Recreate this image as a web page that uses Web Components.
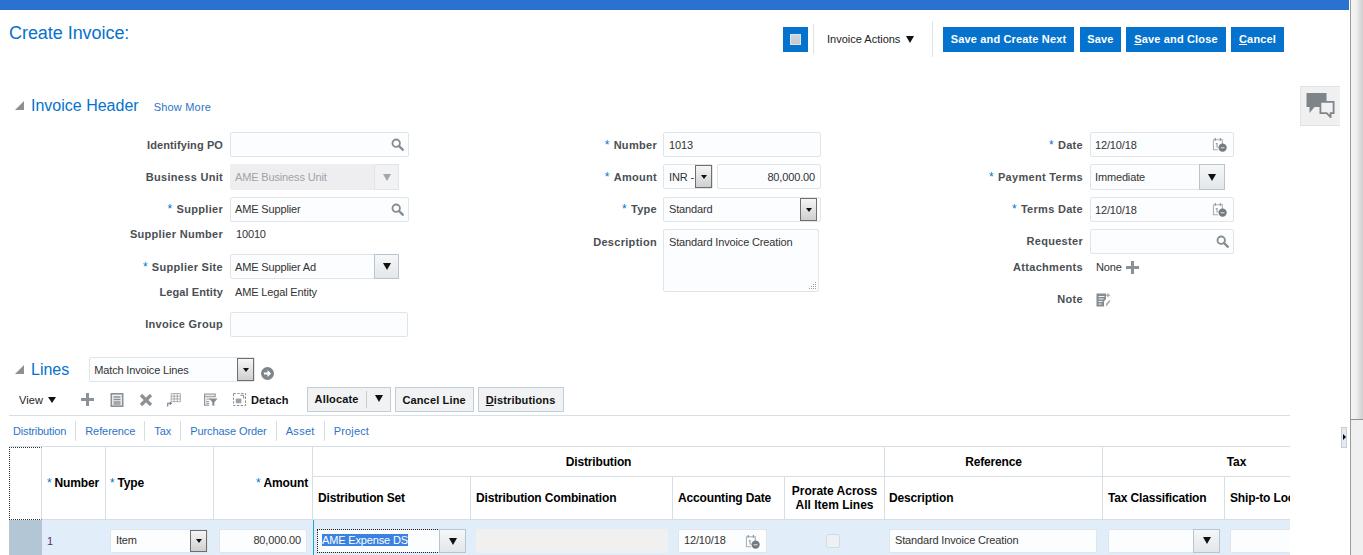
<!DOCTYPE html>
<html><head><meta charset="utf-8"><title>Create Invoice</title>
<style>
html,body{margin:0;padding:0;height:555px;overflow:hidden;background:#fff;font-family:"Liberation Sans",Arial,sans-serif}
</style></head><body>
<invoice-app>
  <page-title slot="main"></page-title>
  <section-head slot="main" title="Invoice Header" style="margin-top:21px;height:29px"><a-link style="margin-left:15px;margin-top:3px">Show More</a-link></section-head>
  <form-grid slot="main" style="margin-top:12px">
    <form-col style="--lw:223px;--gap:7px;width:440px">
      <form-row label="Identifying PO" h="32" style="--ls:.1px"><x-input w="179" icon="search"></x-input></form-row>
      <form-row label="Business Unit" h="33"><x-select w="169" btn="25" kind="disabled" value="AME Business Unit" style="height:26px"></x-select></form-row>
      <form-row label="Supplier" req h="25" style="--lh:25px"><x-input w="179" pl="4" h2 icon="search" value="AME Supplier"></x-input></form-row>
      <form-row label="Supplier Number" h="32" style="--lh:25px"><x-text style="margin-left:6px">10010</x-text></form-row>
      <form-row label="Supplier Site" req h="26"><x-select w="169" btn="25" kind="flat" value="AME Supplier Ad"></x-select></form-row>
      <form-row label="Legal Entity" h="32" style="--ls:.1px;--lh:25px"><x-text style="margin-left:5px">AME Legal Entity</x-text></form-row>
      <form-row label="Invoice Group" h="25" style="--lh:25px"><x-input w="178"></x-input></form-row>
    </form-col>
    <form-col style="--lw:217px;--gap:6px;width:420px">
      <form-row label="Number" req h="32"><x-input w="158" value="1013"></x-input></form-row>
      <form-row label="Amount" req h="33"><x-select w="50" btn="17" kind="native" pl="5" value="INR -" style="margin-right:4px"></x-select><x-input w="104" value="80,000.00" align="right"></x-input></form-row>
      <form-row label="Type" req h="32" style="--lh:25px"><x-select w="158" btn="17" kind="native" pl="5" inset="3" tight value="Standard"></x-select></form-row>
      <form-row label="Description" h="63"><x-area w="156" h="63">Standard Invoice Creation</x-area></form-row>
    </form-col>
    <form-col style="--lw:223px;--gap:7px;width:400px">
      <form-row label="Date" req h="32"><x-input w="144" pl="4" icon="cal" value="12/10/18"></x-input></form-row>
      <form-row label="Payment Terms" req h="33"><x-select w="135" btn="26" kind="flat" value="Immediate" style="height:26px"></x-select></form-row>
      <form-row label="Terms Date" req h="32" style="--lh:25px"><x-input w="144" pl="4" icon="cal" value="12/10/18"></x-input></form-row>
      <form-row label="Requester" h="26" style="--lh:25px"><x-input w="144" icon="search"></x-input></form-row>
      <form-row label="Attachments" h="32" style="--lh:25px"><x-text style="margin-left:6px">None</x-text><x-icon name="plus" style="margin-left:4px;--s:13px"></x-icon></form-row>
      <form-row label="Note" h="25" style="--lh:25px"><x-icon name="note" style="margin-left:6px;--s:15px"></x-icon></form-row>
    </form-col>
  </form-grid>
  <section-head slot="main" title="Lines" style="margin-top:20px;height:25px">
    <x-select w="166" btn="17" kind="native" value="Match Invoice Lines" style="margin-left:20px"></x-select>
    <x-icon name="go" style="margin-left:6px;margin-top:7px;--s:13px"></x-icon>
  </section-head>
  <lines-toolbar slot="main" style="margin-top:5px"></lines-toolbar>
  <lines-tabs slot="main"></lines-tabs>
  <lines-table slot="main">
    <t-cell head corner style="grid-row:1/3"></t-cell>
    <t-cell head style="grid-row:1/3;padding-left:5px"><req-mark></req-mark>Number</t-cell>
    <t-cell head style="grid-row:1/3;padding-left:4px"><req-mark></req-mark>Type</t-cell>
    <t-cell head end style="grid-row:1/3;padding-right:4px"><req-mark></req-mark>Amount</t-cell>
    <t-cell head center style="grid-column:span 4">Distribution</t-cell>
    <t-cell head center>Reference</t-cell>
    <t-cell head center style="grid-column:span 2">Tax</t-cell>
    <t-cell head style="padding-left:5px">Distribution Set</t-cell>
    <t-cell head style="padding-left:5px">Distribution Combination</t-cell>
    <t-cell head style="padding-left:5px">Accounting Date</t-cell>
    <t-cell head center style="line-height:14px;letter-spacing:0">Prorate Across<br>All Item Lines</t-cell>
    <t-cell head style="padding-left:4px">Description</t-cell>
    <t-cell head style="padding-left:5px">Tax Classification</t-cell>
    <t-cell head style="padding-left:5px">Ship-to Loc</t-cell>

    <t-cell rowhead></t-cell>
    <t-cell body style="padding-left:5px;padding-top:5px;color:#5a2d6e">1</t-cell>
    <t-cell body style="padding-left:4px"><x-select w="98" btn="17" kind="native" pl="5" tight value="Item" style="height:24px"></x-select></t-cell>
    <t-cell body style="padding-left:5px"><x-input w="88" h="24" h2 value="80,000.00" align="right"></x-input></t-cell>
    <t-cell body accent style="padding-left:3px"><x-select w="149" btn="27" kind="flat" tight value="AME Expense DS" selected style="height:24px"></x-select></t-cell>
    <t-cell body style="padding-left:5px"><grey-box></grey-box></t-cell>
    <t-cell body style="padding-left:5px"><x-input w="89" h="24" h2 icon="cal" value="12/10/18"></x-input></t-cell>
    <t-cell body center style="padding-right:5px"><x-check></x-check></t-cell>
    <t-cell body style="padding-left:4px"><x-input w="208" h="24" h2 value="Standard Invoice Creation"></x-input></t-cell>
    <t-cell body style="padding-left:5px"><x-select w="112" btn="27" kind="flat" style="height:24px"></x-select></t-cell>
    <t-cell body style="padding-left:5px"><x-input w="90" h="24"></x-input></t-cell>
  </lines-table>
</invoice-app>
<script>
const ICONS={
 search:'<svg viewBox="0 0 14 14" width="100%" height="100%"><circle cx="5.600" cy="5.600" r="4" fill="#fff" stroke="#858d92" stroke-width="2"/><path d="M8.600 8.600l4 4" stroke="#858d92" stroke-width="2.600" stroke-linecap="round"/></svg>',
 cal:'<svg viewBox="0 0 16 16" width="100%" height="100%"><path d="M1.500 3h9.500v5M1.500 3v10.500h5" fill="none" stroke="#a7adb1" stroke-width="1.100"/><path d="M3.500 1v3M9 1v3" stroke="#8f969b" stroke-width="1.300"/><path d="M4 7h1.400v4.500" fill="none" stroke="#9aa1a6" stroke-width="1.200"/><circle cx="11.300" cy="11.300" r="4.400" fill="#747b80"/><path d="M9.300 11.500h4" stroke="#e4e6e8" stroke-width="1.100"/></svg>',
 plus:'<svg viewBox="0 0 13 13" width="100%" height="100%"><path d="M5 0h3v5h5v3H8v5H5V8H0V5h5z" fill="#8b9297"/></svg>',
 doc:'<svg viewBox="0 0 13 14" width="100%" height="100%"><rect x=".8" y=".8" width="11.400" height="12.400" fill="#eef0f1" stroke="#8b9297" stroke-width="1.600"/><path d="M3 4h7M3 6.500h7M3 9h7M3 11h7" stroke="#8b9297" stroke-width="1.300"/></svg>',
 x:'<svg viewBox="0 0 14 14" width="100%" height="100%"><path d="M2 2l10 10M12 2L2 12" stroke="#8b9297" stroke-width="3.200"/></svg>',
 freeze:'<svg viewBox="0 0 15 15" width="100%" height="100%"><path d="M4.500.7h9.800v8.600H4.500zM4.500 3.500h9.800M7.700.7v8.600M11 .7v8.600M4.500 6.400h9.800" fill="none" stroke="#989fa4" stroke-width=".9"/><path d="M.8 14.500v-3.500h3" fill="none" stroke="#70777c" stroke-width="1.200"/><path d="M3 9l2.600 2L3 13z" fill="#70777c"/></svg>',
 filter:'<svg viewBox="0 0 15 14" width="100%" height="100%"><path d="M.6.6h11.400v3H.6zM.6 3.600v9h5" fill="#e6e8ea" stroke="#8b9297" stroke-width="1.100"/><path d="M2.500 6h5M2.500 8.500h3M2.500 10.600h3" stroke="#8b9297"/><path d="M5.500 5.500h9l-3.400 4v4l-2.200-1v-3z" fill="#858c91"/></svg>',
 detach:'<svg viewBox="0 0 14 14" width="100%" height="100%"><rect x=".5" y=".5" width="13" height="13" fill="none" stroke="#777e83" stroke-dasharray="2.500 1.600"/><rect x="3" y="6" width="6" height="5" fill="#9ba1a6"/><path d="M8 2.500h3.500v3.500" fill="none" stroke="#777e83"/></svg>',
 note:'<svg viewBox="0 0 15 15" width="100%" height="100%"><path d="M.5 1.500h9.500v5.500l-2 2.500v5H.5z" fill="#858c91"/><path d="M2.500 4.500h6M2.500 7h5M2.500 9.500h4M2.500 12h3" stroke="#f0f1f2"/><path d="M12 .5l.8 2 2 .8-2 .8-.8 2-.8-2-2-.8 2-.8zM9.500 14.500l.8-3 3.200-3.500 1 1-3.500 4.500z" fill="#a3a9ad"/></svg>',
 go:'<svg viewBox="0 0 13 13" width="100%" height="100%"><circle cx="6.500" cy="6.500" r="6.500" fill="#7f868b"/><path d="M3 5.500h3.500V3l3.500 3.500L6.500 10V7.500H3z" fill="#fff"/></svg>',
 tri:'<svg viewBox="0 0 10 10" width="100%" height="100%"><path d="M0 10L10 0v10z" fill="#8c9196"/></svg>',
 comment:'<svg viewBox="0 0 28 25" width="100%" height="100%"><path d="M0 0h20v14h-12l-5 6v-6H0z" fill="#7e858a"/><path d="M13.900 8.900h13.200v11.200h-3v4l-4-4h-6.200z" fill="#f0f1f2" stroke="#7e858a" stroke-width="1.800"/></svg>'
};
function def(name,css,html,setup){
  customElements.define(name,class extends HTMLElement{
    constructor(){super();this.attachShadow({mode:'open'});}
    connectedCallback(){
      const a=n=>this.getAttribute(n);
      const h=typeof html==='function'?html(a,this):html;
      this.shadowRoot.innerHTML='<style>svg{display:block}'+css+'</style>'+h;
      if(setup)setup(this,a);
    }
  });
}
const TXT='font:11px "Liberation Sans",Arial,sans-serif;color:#333;letter-spacing:-.15px;';
def('invoice-app',`
  :host{display:flex;width:1363px;height:555px;overflow:hidden;position:relative}
  .m{width:1350px;display:flex;flex-direction:column;flex:none}
  .bar{height:10px;background:#2a72cf;flex:none;margin-right:1px}
  .sb{flex:1;border-left:1px solid #9a9a9a;background:#f0f0f0;display:flex;flex-direction:column}
  .th{height:419px;background:linear-gradient(90deg,#f4f4f4,#f0f0f0 40%,#cfcfcf);border-bottom:1px solid #8f8f8f;flex:none}
  .fb{position:absolute;left:1300px;top:86px;width:38px;height:38px;border:1px solid #dfe3e6;border-right:1px solid #f0f0f0;background:#f0f0f0;padding:0}
  .fb div{position:absolute;left:5px;top:6px;width:29px;height:25px}
  .sp{position:absolute;left:1341px;top:427px;width:4px;height:19px;background:#e4eaf1;border:1px solid #c5ced8}
  .sp i{position:absolute;left:1px;top:6px;border-left:3px solid #000;border-top:3px solid transparent;border-bottom:3px solid transparent}
`,()=>`<div class="m"><div class="bar"></div><slot name="main"></slot></div>
  <div class="sb"><div class="th"></div></div><div class="fb"><div>${ICONS.comment}</div></div><div class="sp"><i></i></div><slot hidden></slot>`);
def('page-title',`
  :host{display:flex;height:60px;padding:0 66px 0 9px;align-items:flex-start;box-sizing:border-box}
  h1{margin:12px 0 0;font:18px/22px "Liberation Sans",Arial,sans-serif;color:#0572ce;flex:1;letter-spacing:-.05px}
  .acts{display:flex;align-items:center;margin-top:11px;height:36px}
  .ib{width:25px;height:25px;background:#0572ce;display:flex;align-items:center;justify-content:center}
  .ib i{display:block;width:11px;height:11px;background:linear-gradient(#cfd4d9,#c4cad0);border:1px solid #dbe5ee;box-sizing:border-box}
  .sep{width:1px;background:#dfe3e7}
  .ia{font:11px "Liberation Sans",Arial,sans-serif;color:#222;margin:0 16px 0 13px;display:flex;align-items:center;width:89px;white-space:nowrap}
  .ia i{margin-left:6px;border-top:7px solid #111;border-left:4px solid transparent;border-right:4px solid transparent}
  .g{display:flex;gap:5px;margin-left:10px}
  .g x-button:first-child{margin-right:1px}
`,()=>`<h1>Create Invoice:</h1><div class="acts"><div class="ib"><i></i></div>
   <div class="sep" style="height:30px;margin-left:5px"></div>
   <div class="ia">Invoice Actions<i></i></div>
   <div class="sep" style="height:36px"></div>
   <div class="g"><x-button w="131" primary>Save and Create Next</x-button><x-button w="41" primary>Save</x-button><x-button w="100" primary><u>S</u>ave and Close</x-button><x-button w="53" primary><u>C</u>ancel</x-button></div></div>`);
def('x-button',`
  :host{display:inline-flex;box-sizing:border-box;height:25px;align-items:center;justify-content:center;font:bold 11px "Liberation Sans",Arial,sans-serif;white-space:nowrap;background:#f0f2f4;border:1px solid #c3cdd5;color:#111;letter-spacing:.15px}
  :host([primary]){background:#0572ce;border:0;color:#fff}
  ::slotted(u){text-decoration:underline}
`,(a,el)=>{el.style.width=a('w')+'px';return '<slot></slot>'});
def('a-link',`:host{display:inline-block;font:11px "Liberation Sans",Arial,sans-serif;color:#2c74c9;letter-spacing:.2px}`,'<slot></slot>');
def('section-head',`
  :host{display:flex;align-items:center;padding-left:15px}
  .t{width:9px;height:9px;margin-right:7px;margin-top:-1px}
  .h{font:16px "Liberation Sans",Arial,sans-serif;color:#0572ce;white-space:nowrap}
`,(a)=>`<div class="t">${ICONS.tri}</div><span class="h">${a('title')}</span><slot></slot>`);
def('form-grid',`:host{display:flex;height:205px}`,'<slot></slot>');
def('form-col',`:host{display:flex;flex-direction:column;flex:none}`,'<slot></slot>');
def('form-row',`
  :host{display:flex;align-items:flex-start;flex:none}
  .l{width:var(--lw);margin-right:var(--gap);flex:none;text-align:right;font:bold 11px/var(--lh,26px) "Liberation Sans",Arial,sans-serif;color:#4a4f54;white-space:nowrap;letter-spacing:var(--ls,.3px)}
  .s{color:#0572ce;font-weight:normal;font-size:12px;margin-right:4px}
  .c{display:flex;align-items:center;min-height:25px}
`,(a,el)=>{el.style.height=a('h')+'px';return `<div class="l">${el.hasAttribute('req')?'<span class="s">*</span>':''}${a('label')}</div><div class="c"><slot></slot></div>`});
def('x-text',`:host{display:inline-block;${TXT}line-height:25px;white-space:nowrap}`,'<slot></slot>');
def('x-input',`
  :host{display:inline-flex;box-sizing:border-box;height:25px;border:1px solid #dfe5e9;border-radius:2px;background:#fcfdfe;align-items:center;padding:0 5px;${TXT}}
  :host([align=right]){justify-content:flex-end;padding-right:5px}
  span{flex:1;white-space:nowrap}
  :host([h2]) span{margin-bottom:2px}
  :host([align=right]) span{text-align:right}
  .i{width:13px;height:13px;flex:none;margin-right:-1px}
  .cal{width:15px;height:15px;margin-right:1px}
`,(a,el)=>{el.style.width=a('w')+'px';if(a('h'))el.style.height=a('h')+'px';if(a('pl'))el.style.paddingLeft=a('pl')+'px';const ic=a('icon');
  return `<span>${a('value')||''}</span>${ic?`<div class="i ${ic}">${ICONS[ic]}</div>`:''}`});
def('x-select',`
  :host{display:inline-flex;box-sizing:border-box;height:25px;border:1px solid #dfe5e9;border-radius:2px;background:#fcfdfe;align-items:stretch;position:relative;${TXT}}
  .v{flex:1;padding-left:4px;display:flex;align-items:center;white-space:nowrap;overflow:hidden;min-width:0}
  :host([tight]) .v{padding-bottom:2px}
  .b{flex:none;box-sizing:border-box;display:flex;align-items:center;justify-content:center}
  .b i{border-top:5px solid #111;border-left:4px solid transparent;border-right:4px solid transparent}
  :host([kind=native]) .b{border:1px solid #6e6e6e;margin:0;background:linear-gradient(#f6f6f6,#cfcfcf)}
  :host([kind=native]) .b i{border-left-width:3.5px;border-right-width:3.5px;border-top-width:4px}
  :host([kind=flat]) .b{border:1px solid #b8c5cf;margin:-1px -1px -1px 0;background:linear-gradient(#f5f7f8,#e3e7ea)}
  :host([kind=flat]) .b i{border-top-width:7px}
  :host([kind=disabled]){background:#eeeef0;border-color:#eeeef0;color:#a0a3a7}
  :host([kind=disabled]) .b{border:1px solid #e2e4e6;margin:-1px -1px -1px 0;background:#f1f2f3}
  :host([kind=disabled]) .b i{border-top:7px solid #a3a7aa}
  .sel{background:#3b82e0;color:#fff}
  :host([selected]) .v{outline:1px dotted #222;outline-offset:0;}
`,(a,el)=>{el.style.width=a('w')+'px';const v=a('value')||'';
  if(a('inset'))el.style.paddingRight=a('inset')+'px';
  return `<div class="v" ${a('pl')?`style="padding-left:${a('pl')}px"`:''}>${el.hasAttribute('selected')?`<span class="sel">${v}</span>`:v}</div><div class="b" style="width:${a('btn')}px"><i></i></div>`});
def('x-area',`
  :host{display:block;box-sizing:border-box;border:1px solid #dfe5e9;border-radius:2px;background:#fcfdfe;padding:6px 5px;position:relative;${TXT}white-space:nowrap}
  svg{position:absolute;right:1px;bottom:1px;width:8px;height:8px}
`,(a,el)=>{el.style.width=a('w')+'px';el.style.height=a('h')+'px';return '<slot></slot><svg viewBox="0 0 8 8"><path d="M6 0h1v1H6zM4 2h1v1H4zM6 2h1v1H6zM2 4h1v1H2zM4 4h1v1H4zM6 4h1v1H6zM0 6h1v1H0zM2 6h1v1H2zM4 6h1v1H4zM6 6h1v1H6z" fill="#9aa1a6"/></svg>'});
def('x-icon',`:host{display:inline-block;width:var(--s,14px);height:var(--s,14px);flex:none}`,(a)=>ICONS[a('name')]);
def('x-check',`:host{display:block;width:14px;height:14px;box-sizing:border-box;border:1px solid #d5dce1;border-radius:2px;background:#eef1f3}`,'');
def('grey-box',`:host{display:block;width:192px;height:24px;background:#f0f0f0}`,'');
def('req-mark',`:host{display:inline;color:#0572ce;font-weight:normal;margin-right:3px}`,'*');
def('lines-toolbar',`
  :host{display:flex;align-items:center;height:25px;padding-left:9px;margin-left:0;position:relative;font:11px "Liberation Sans",Arial,sans-serif;color:#333}
  .v{display:flex;align-items:center;margin-left:10px;width:62px;color:#222;letter-spacing:.1px}
  .v i{margin-left:5px;border-top:6px solid #111;border-left:4.5px solid transparent;border-right:4.5px solid transparent}
  .ic{flex:none;display:block}
  .d{font-weight:bold;color:#111;margin-left:5px;margin-right:18px;letter-spacing:.15px}
  .split{display:flex;width:84px;height:25px;box-sizing:border-box;border:1px solid #c3cdd5;background:#f0f2f4;font-weight:bold;color:#111;align-items:center;margin-right:4px;letter-spacing:.15px}
  .split b{width:58px;text-align:center;border-right:1px solid #c3cdd5;height:17px;line-height:17px;box-sizing:content-box}
  .split i{margin-left:8px;border-top:7px solid #111;border-left:4.5px solid transparent;border-right:4.5px solid transparent;margin-top:-2px}
`,()=>`<div class="v">View<i></i></div>
  <x-icon class="ic" name="plus" style="--s:13px;margin-right:16px"></x-icon>
  <x-icon class="ic" name="doc" style="--s:14px;margin-right:15px"></x-icon>
  <x-icon class="ic" name="x" style="--s:14px;margin-right:14px"></x-icon>
  <x-icon class="ic" name="freeze" style="--s:14px;margin-right:23px"></x-icon>
  <x-icon class="ic" name="filter" style="--s:14px;margin-right:15px"></x-icon>
  <x-icon class="ic" name="detach" style="--s:13px"></x-icon>
  <span class="d">Detach</span>
  <div class="split"><b>Allocate</b><i></i></div>
  <x-button w="79" style="margin-right:4px">Cancel Line</x-button>
  <x-button w="86"><u>D</u>istributions</x-button>`);
def('lines-tabs',`
  :host{display:flex;align-items:center;height:31px;margin-top:3px;margin-left:9px;width:1281px;box-sizing:border-box;border-top:1px solid #d6dfe6;padding-left:4px;font:11px "Liberation Sans",Arial,sans-serif;color:#2c74c9;letter-spacing:-.08px}
  span{white-space:nowrap}
  i{display:block;width:1px;height:20px;background:#d6dfe6;margin:0 9px}
`,()=>`<span style="letter-spacing:-.15px">Distribution</span><i></i><span>Reference</span><i></i><span>Tax</span><i></i><span>Purchase Order</span><i></i><span style="letter-spacing:.3px">Asset</span><i></i><span style="letter-spacing:.15px">Project</span>`);
def('lines-table',`
  :host{display:grid;margin-left:9px;width:1281px;height:109px;overflow:hidden;grid-template-columns:33px 64px 108px 99px 158px 202px 112px 100px 218px 122px 146px;grid-template-rows:30px 43px 36px;border-top:1px solid #d6dfe6;box-sizing:border-box}
`,'<slot></slot>');
def('t-cell',`
  :host{display:flex;align-items:center;box-sizing:border-box;min-width:0;overflow:hidden;white-space:nowrap;font:12px "Liberation Sans",Arial,sans-serif}
  :host([head]){font-weight:bold;color:#000;border-right:1px solid #d6dfe6;border-bottom:1px solid #d6dfe6;background:#fff;font-size:12px;letter-spacing:-.15px}
  :host([center]){justify-content:center;text-align:center}
  :host([end]){justify-content:flex-end}
  :host([corner]){border-left:1px dotted #333;border-top:1px dotted #333;border-bottom:1px dotted #333;border-right:1px solid #d6dfe6}
  :host([rowhead]){background:#b3c6d6}
  :host([body]){background:#e1eefa;font-size:11px;padding-top:6px}
  :host([accent]){border-left:1px solid #1aa7c9}
`,'<div><slot></slot></div>');
</script>
</body></html>
